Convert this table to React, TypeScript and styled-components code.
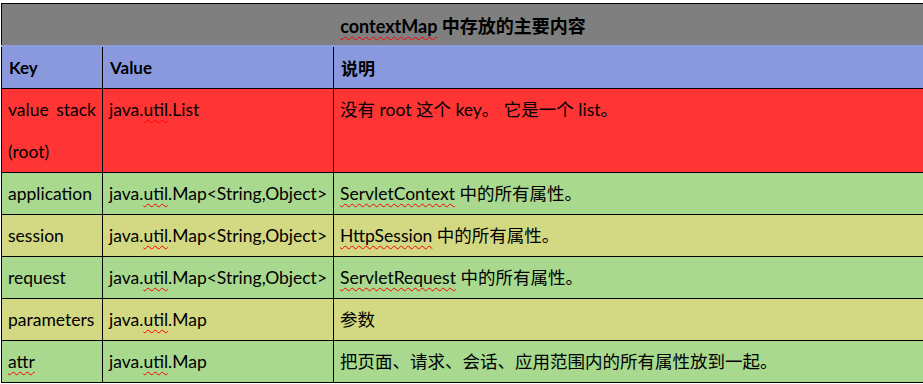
import React from 'react';
import styled, { createGlobalStyle } from 'styled-components';

const GlobalStyle = createGlobalStyle`
  html, body {
    margin: 0;
    padding: 0;
    background: #ffffff;
    overflow: hidden;
  }
  body {
    font-family: Lato, 'Noto Sans CJK SC', sans-serif;
  }
`;

const Page = styled.div`
  padding: 3px 0 0 1px;
  width: 940px;
`;

const Table = styled.table`
  width: 924px;
  border-collapse: collapse;
  table-layout: fixed;
  color: #000000;
  font-size: 17.5px;
`;

const TitleCell = styled.th`
  height: 41px;
  background: #7f7f7f;
  border: 1px solid #000000;
  border-bottom: 2px solid #8c9ddc;
  font-size: 18px;
  font-weight: 700;
  text-align: center;
  padding: 0;
`;

const HeadCell = styled.th`
  height: 41px;
  background: #8a99de;
  border: 1px solid #000000;
  text-align: left;
  padding: 0 7px;
  font-weight: 700;
  font-size: 17px;
`;

const Cell = styled.td<{ $tone: string; $justify?: boolean }>`
  background: ${p => p.$tone};
  border: 1px solid #000000;
  padding: 0 6px;
  line-height: ${p => (p.$justify ? '41.5px' : '41px')};
  vertical-align: top;
  text-align: ${p => (p.$justify ? 'justify' : 'left')};
  text-align-last: left;
  white-space: ${p => (p.$justify ? 'normal' : 'nowrap')};
  overflow: hidden;
`;

const Typo = styled.span`
  text-decoration: underline wavy #ff0000;
  text-decoration-thickness: 1px;
  text-underline-offset: 3px;
  text-decoration-skip-ink: none;
`;

const RED = '#ff3535';
const GREEN = '#a8d98f';
const YELLOW = '#d3d882';

const Util = ({ tail }: { tail: string }) => (
  <>
    java.<Typo>util</Typo>.{tail}
  </>
);

export default function App() {
  return (
    <>
      <GlobalStyle />
      <Page>
        <Table>
          <colgroup>
            <col style={{ width: 101 }} />
            <col style={{ width: 231 }} />
            <col />
          </colgroup>
          <thead>
            <tr>
              <TitleCell colSpan={3}>
                <Typo>contextMap</Typo> 中存放的主要内容
              </TitleCell>
            </tr>
            <tr>
              <HeadCell>Key</HeadCell>
              <HeadCell>Value</HeadCell>
              <HeadCell>说明</HeadCell>
            </tr>
          </thead>
          <tbody>
            <tr>
              <Cell $tone={RED} $justify>
                value stack (root)
              </Cell>
              <Cell $tone={RED}>
                <Util tail="List" />
              </Cell>
              <Cell $tone={RED}>没有 root 这个 key。 它是一个 list。</Cell>
            </tr>
            <tr>
              <Cell $tone={GREEN}>application</Cell>
              <Cell $tone={GREEN}>
                <Util tail="Map<String,Object>" />
              </Cell>
              <Cell $tone={GREEN}>
                <Typo>ServletContext</Typo> 中的所有属性。
              </Cell>
            </tr>
            <tr>
              <Cell $tone={YELLOW}>session</Cell>
              <Cell $tone={YELLOW}>
                <Util tail="Map<String,Object>" />
              </Cell>
              <Cell $tone={YELLOW}>
                <Typo>HttpSession</Typo> 中的所有属性。
              </Cell>
            </tr>
            <tr>
              <Cell $tone={GREEN}>request</Cell>
              <Cell $tone={GREEN}>
                <Util tail="Map<String,Object>" />
              </Cell>
              <Cell $tone={GREEN}>
                <Typo>ServletRequest</Typo> 中的所有属性。
              </Cell>
            </tr>
            <tr>
              <Cell $tone={YELLOW}>parameters</Cell>
              <Cell $tone={YELLOW}>
                <Util tail="Map" />
              </Cell>
              <Cell $tone={YELLOW}>参数</Cell>
            </tr>
            <tr>
              <Cell $tone={GREEN}>
                <Typo>attr</Typo>
              </Cell>
              <Cell $tone={GREEN}>
                <Util tail="Map" />
              </Cell>
              <Cell $tone={GREEN}>把页面、请求、会话、应用范围内的所有属性放到一起。</Cell>
            </tr>
          </tbody>
        </Table>
      </Page>
    </>
  );
}
